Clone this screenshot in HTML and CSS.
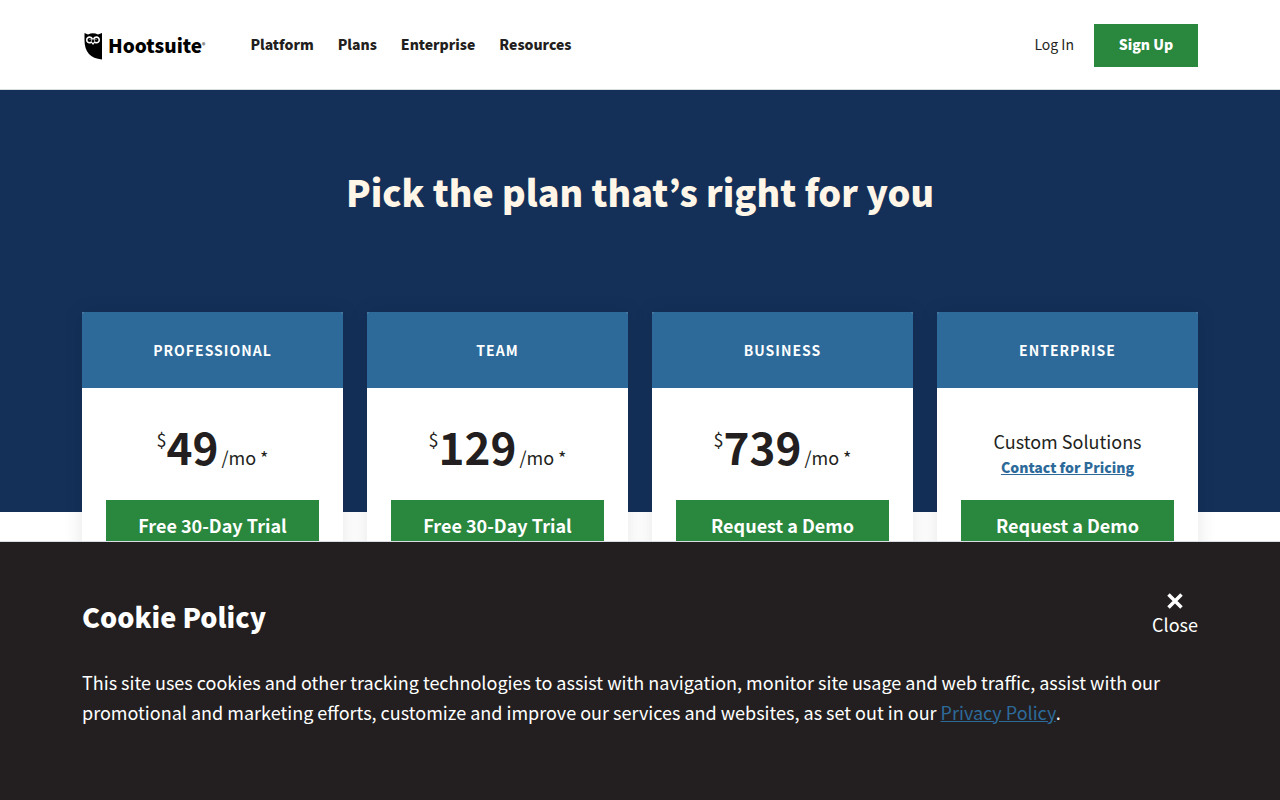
FILE: index.html
```html
<!DOCTYPE html>
<html lang="en">
<head>
    <meta charset="UTF-8">
    <meta name="viewport" content="width=device-width, initial-scale=1.0">
    <title>Hootsuite Plans</title>
<link rel="stylesheet" href="styles.css">
</head>
<body>
<header class="header">
    <div class="container nav">
        <a href="#" class="logo">
            <svg class="owl" viewBox="0 0 36 56" width="18" height="28" aria-hidden="true">
                <path d="M1 2 L8 5 Q18 0 28 5 L36 2 V55 Q1 52 1 16 Z" fill="#000"/>
                <path d="M18 13 C14 6 4 8 4 16 C4 22 10 25 15 22 L18 26 L21 22 C26 25 32 22 32 16 C32 8 22 6 18 13 Z" fill="#fff"/>
                <circle cx="11" cy="16" r="4" fill="#000"/>
                <circle cx="25" cy="16" r="4" fill="#000"/>
                <circle cx="12" cy="15" r="1" fill="#fff"/>
                <circle cx="24" cy="15" r="1" fill="#fff"/>
                <path d="M18 13 L21 19 L18 22 L15 19 Z" fill="#000"/>
            </svg>
            <span class="logo-name">Hootsuite</span><span class="reg">®</span>
        </a>
        <nav class="menu">
            <a href="#">Platform</a>
            <a href="#">Plans</a>
            <a href="#">Enterprise</a>
            <a href="#">Resources</a>
        </nav>
        <a href="#" class="login">Log In</a>
        <button type="button" class="signup">Sign Up</button>
    </div>
</header>

<main>
    <section class="hero">
        <h1>Pick the plan that’s right for you</h1>
    </section>
    <section class="container plans">
        <article class="plan">
            <h2>Professional</h2>
            <div class="price"><sup>$</sup><strong>49</strong><span>/mo *</span></div>
            <button type="button" class="cta">Free 30-Day Trial</button>
        </article>
        <article class="plan">
            <h2>Team</h2>
            <div class="price"><sup>$</sup><strong>129</strong><span>/mo *</span></div>
            <button type="button" class="cta">Free 30-Day Trial</button>
        </article>
        <article class="plan">
            <h2>Business</h2>
            <div class="price"><sup>$</sup><strong>739</strong><span>/mo *</span></div>
            <button type="button" class="cta">Request a Demo</button>
        </article>
        <article class="plan">
            <h2>Enterprise</h2>
            <div class="custom">
                <p>Custom Solutions</p>
                <a href="#">Contact for Pricing</a>
            </div>
            <button type="button" class="cta">Request a Demo</button>
        </article>
    </section>
</main>

<!-- cookie banner -->
<aside class="cookie">
    <div class="container">
        <div class="cookie-top">
            <h2>Cookie Policy</h2>
            <button type="button" class="close">
                <svg viewBox="0 0 32 32" width="16" height="16" aria-hidden="true">
                    <path d="M3 3 L29 29 M29 3 L3 29" stroke="#fff" stroke-width="7"/>
                </svg>
                Close
            </button>
        </div>
        <p>This site uses cookies and other tracking technologies to assist with navigation, monitor site usage and web traffic, assist with our promotional and marketing efforts, customize and improve our services and websites, as set out in our <a href="#">Privacy Policy</a>.</p>
    </div>
</aside>
</body>
</html>
```

FILE: styles.css
```css
* {margin: 0; padding: 0; box-sizing: border-box;}
body {font-family: "Source Sans Pro", "Noto Sans CJK KR", sans-serif; font-size: 18px; line-height: 30px; color: #231f20; background-color: #fff;}
button {font-family: inherit; border: 0; cursor: pointer;}
a {color: inherit; text-decoration: none;}

.container {width: 100%; max-width: 1164px; margin: 0 auto; padding: 0 24px;}

/* header */
.header {padding: 24px 0 22px; border-bottom: 1px solid #d8dce3;}
.nav {display: flex; align-items: flex-start;}
.logo {display: flex; align-items: center; height: 44px; margin: 0 45px -1px 2px; color: #000;}
.owl {margin-right: 6px;}
.logo-name {font-size: 19px; line-height: 40px; padding-bottom: 2px; font-weight: 900;}
.reg {font-size: 7px; line-height: 8px; padding-bottom: 2px;}
.menu {display: flex; gap: 24px; font-size: 14px; line-height: 40px; font-weight: 900;}
.login {margin-left: auto; font-size: 14px; line-height: 40px;}
.signup {margin-left: 20px; width: 104px; height: 43px; padding-bottom: 3px; background-color: #29873e; color: #fff; font-size: 14px; font-weight: 900;}

/* hero */
.hero {height: 422px; padding-top: 72px; background-color: #143059; text-align: center;}
.hero h1 {font-size: 36px; line-height: 58px; color: #fff6e8; font-weight: 900;}

/* plans */
.plans {display: grid; grid-template-columns: repeat(4, 1fr); gap: 24px; margin-top: -200px;}
.plan {min-height: 480px; background-color: #fff; text-align: center; border-radius: 2px; box-shadow: 0 0 20px rgba(0,0,0,0.1); overflow: hidden;}
.plan h2 {height: 76px; background-color: #2d6a9a; color: #fff; font-size: 14px; line-height: 76px; letter-spacing: 1px; text-transform: uppercase;}
.price {display: flex; justify-content: center; height: 112px; padding-top: 30px;}
.price sup {font-size: 18px; line-height: 42px;}
.price strong {font-size: 44px; line-height: 56px;}
.price span {margin-left: 3px; line-height: 78px;}
.custom {height: 112px; padding-top: 39px;}
.custom p {line-height: 28px;}
.custom a {display: block; font-size: 14px; line-height: 24px; font-weight: 900; color: #2d6a9a; text-decoration: underline;}
.cta {width: calc(100% - 48px); height: 52px; padding-bottom: 2px; background-color: #29873e; color: #fff; font-size: 18px; font-weight: bold;}

/* cookie banner */
.cookie {position: fixed; left: 0; right: 0; bottom: 0; padding: 51px 0 73px; background-color: #231f20; color: #fff; border-top: 1px solid #d8dce3;}
.cookie-top {display: flex; justify-content: space-between; margin-bottom: 26px;}
.cookie h2 {font-size: 27px; line-height: 48px; font-weight: 900;}
.cookie p a {color: #2d6a9a; text-decoration: underline;}
.close {display: flex; flex-direction: column; align-items: center; background: none; color: #fff; font-size: 18px; line-height: 30px;}
```
